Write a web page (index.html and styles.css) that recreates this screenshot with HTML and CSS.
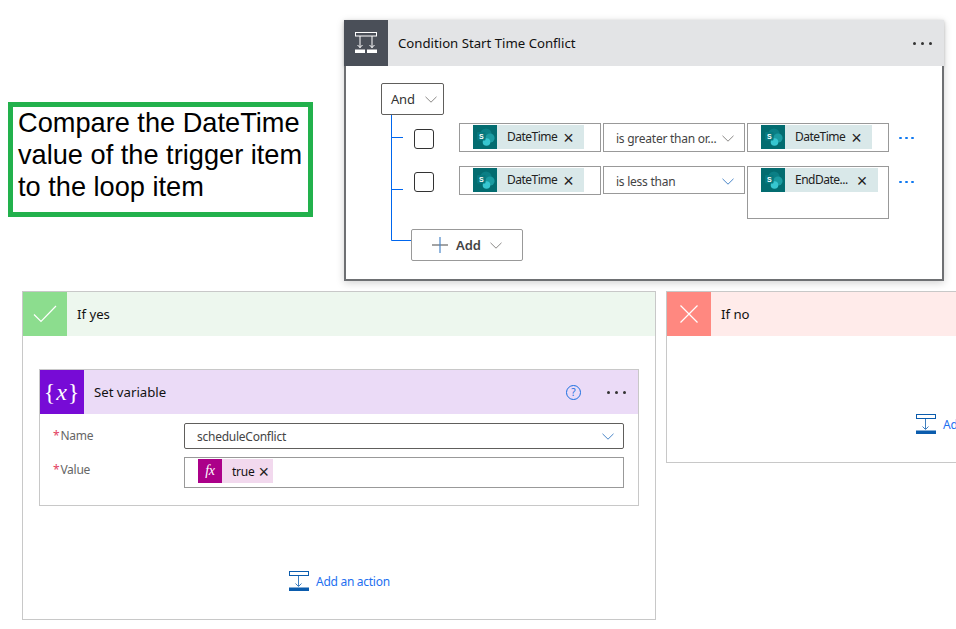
FILE: index.html
```html
<!DOCTYPE html>
<html lang="en">
<head>
<meta charset="utf-8">
<title>Condition Start Time Conflict</title>
<link rel="stylesheet" href="styles.css">
</head>
<body>
<main class="canvas">
  <svg width="0" height="0" class="defs" aria-hidden="true">
    <defs>
      <symbol id="sp" viewBox="0 0 24 24">
        <rect width="24" height="24" fill="#036c70"/>
        <circle cx="13" cy="9" r="5.6" fill="#0b7f85"/>
        <circle cx="17" cy="13" r="4.6" fill="#1a9ba1"/>
        <circle cx="13.5" cy="17" r="3.8" fill="#37c6d0"/>
        <rect x="4" y="7" width="8.5" height="8.5" rx="1" fill="#06797e"/>
        <text x="8.2" y="14" class="sp-s">S</text>
      </symbol>
      <symbol id="chev" viewBox="0 0 12 7">
        <path d="M.5.8 6 6.2 11.5.8" fill="none" stroke="currentColor" stroke-width="1"/>
      </symbol>
      <symbol id="addact" viewBox="0 0 20 20">
        <rect x=".5" y=".5" width="19" height="4" fill="none" stroke="#0b5cad" stroke-width="1"/>
        <path d="M9.5 5v10M6.5 12.5l3 3 3-3" fill="none" stroke="#3f7fbf" stroke-width="1"/>
        <rect y="16.5" width="20" height="3.5" fill="#0b5cad"/>
      </symbol>
    </defs>
  </svg>

  <aside class="note">Compare the DateTime value of the trigger item to the loop item</aside>

  <section class="condition">
    <header class="head head-cond">
      <span class="tile tile-cond">
        <svg width="24" height="24" viewBox="0 0 24 24" fill="none" stroke="#fff" stroke-width="1">
          <rect x="1.5" y="1.5" width="21" height="3.5"/>
          <path d="M6 5v12M18 5v12M3.5 14 6 16.5 8.500 14M15.500 14 18 16.500 20.500 14"/>
          <rect x="1" y="18.500" width="10" height="3.500" fill="#fff" stroke="none"/>
          <rect x="13" y="18.500" width="10" height="3.500" fill="#fff" stroke="none"/>
        </svg>
      </span>
      <span class="title">Condition Start Time Conflict</span>
      <span class="dots dots-dark"><i></i><i></i><i></i></span>
    </header>
    <div class="cond-body">
      <svg class="tree" width="24" height="126" viewBox="0 0 24 126" aria-hidden="true">
        <path d="M.500 0V125.500H20M.500 22.500H12M.500 74.500H12" fill="none" stroke="#0066ee" stroke-width="1"/>
      </svg>
      <button class="and">And <svg class="chev chev-grey"><use href="#chev"/></svg></button>
      <div class="row row-one">
        <span class="check"></span>
        <div class="field">
          <span class="token tok-sp"><svg class="tok-ic"><use href="#sp"/></svg><span class="tok-text">DateTime</span><span class="tok-x">×</span></span>
        </div>
        <div class="select"><span>is greater than or...</span><svg class="chev chev-grey"><use href="#chev"/></svg></div>
        <div class="field">
          <span class="token tok-sp"><svg class="tok-ic"><use href="#sp"/></svg><span class="tok-text">DateTime</span><span class="tok-x">×</span></span>
        </div>
        <span class="more"><i></i><i></i><i></i></span>
      </div>
      <div class="row row-two">
        <span class="check"></span>
        <div class="field">
          <span class="token tok-sp"><svg class="tok-ic"><use href="#sp"/></svg><span class="tok-text">DateTime</span><span class="tok-x">×</span></span>
        </div>
        <div class="select"><span>is less than</span><svg class="chev chev-blue"><use href="#chev"/></svg></div>
        <div class="field field-tall">
          <span class="token tok-sp tok-wide"><svg class="tok-ic"><use href="#sp"/></svg><span class="tok-text">EndDate...</span><span class="tok-x">×</span></span>
        </div>
        <span class="more"><i></i><i></i><i></i></span>
      </div>
      <button class="add">
        <svg width="16" height="16" viewBox="0 0 16 16"><path d="M0 8h16" stroke="#666" stroke-width="1.200"/><path d="M8 0v16" stroke="#4a86c8" stroke-width="1.200"/></svg>
        <b>Add</b>
        <svg class="chev chev-grey"><use href="#chev"/></svg>
      </button>
    </div>
  </section>

  <section class="branch branch-yes">
    <header class="head head-yes">
      <span class="tile tile-yes">
        <svg width="24" height="18" viewBox="0 0 24 18"><path d="M1 9.500 8 16.500 23 1" fill="none" stroke="#fff" stroke-width="1.200"/></svg>
      </span>
      <span class="title">If yes</span>
    </header>
    <div class="branch-body">
      <article class="action">
        <header class="head head-var">
          <span class="tile tile-var"><span class="braces">{<em>x</em>}</span></span>
          <span class="title">Set variable</span>
          <span class="help">?</span>
          <span class="dots dots-dark dots-var"><i></i><i></i><i></i></span>
        </header>
        <div class="form">
          <div class="form-row">
            <label class="label"><span class="req">*</span>Name</label>
            <div class="combo"><span>scheduleConflict</span><svg class="chev chev-blue"><use href="#chev"/></svg></div>
          </div>
          <div class="form-row">
            <label class="label"><span class="req">*</span>Value</label>
            <div class="value">
              <span class="token tok-fx"><span class="fx">fx</span><span class="tok-text tok-true">true</span><span class="tok-x">×</span></span>
            </div>
          </div>
        </div>
      </article>
      <a class="add-action"><svg width="20" height="20"><use href="#addact"/></svg><span>Add an action</span></a>
    </div>
  </section>

  <section class="branch branch-no">
    <header class="head head-no">
      <span class="tile tile-no">
        <svg width="18" height="18" viewBox="0 0 18 18"><path d="M.5.500l17 17M17.500.500l-17 17" stroke="#fff" stroke-width="1.200"/></svg>
      </span>
      <span class="title">If no</span>
    </header>
    <div class="branch-body">
      <a class="add-action add-action-no"><svg width="20" height="20"><use href="#addact"/></svg><span>Add an action</span></a>
    </div>
  </section>
</main>
</body>
</html>
```
FILE: styles.css
```css
* { box-sizing: border-box; }
html, body { margin: 0; padding: 0; background: #fff; }
body { font-family: "Noto Sans", "Open Sans", sans-serif; color: #111; overflow: hidden; }
.canvas { position: relative; width: 956px; height: 629px; overflow: hidden; }
.defs { position: absolute; }
.sp-s { font: bold 7px "Liberation Sans", sans-serif; fill: #fff; text-anchor: middle; }

.note {
  position: absolute; left: 8px; top: 102px; width: 305px; height: 115px;
  border: 5px solid #22b14c; padding: 0 0 0 5px;
  font: 27.2px/32px "Liberation Sans", Arial, sans-serif; color: #000;
}

.head { display: flex; align-items: center; height: 44px; font-size: 13.2px; }
.tile { flex: none; width: 44px; height: 44px; display: flex; align-items: center; justify-content: center; }
.title { margin-left: 10px; flex: 1; }

.condition { position: absolute; left: 344px; top: 20px; width: 600px; box-shadow: 0 2px 8px rgba(0,0,0,.18); }
.head-cond { height: 46px; background: #e3e4e6; box-shadow: 0 1px 3px rgba(0,0,0,.2); position: relative; }
.tile-cond { height: 46px; background: #4a4f58; }
.dots { display: flex; gap: 5px; margin-right: 12px; }
.dots i { width: 3px; height: 3px; border-radius: 50%; background: #333; }
.dots-var { margin-right: 12px; margin-left: 26px; gap: 5px; }

.cond-body {
  position: relative; height: 215px; background: #fff;
  border: 2px solid #6e7073; border-top: 0; padding: 17px 0 0 35px;
}
.tree { position: absolute; left: 45px; top: 49px; }
.and {
  display: flex; align-items: center; gap: 10px;
  width: 63px; height: 32px; padding: 0 0 0 9px; background: #fff;
  border: 1px solid #605e5c; border-radius: 2px; font: 13px "Noto Sans", sans-serif; color: #333;
  letter-spacing: -.2px;
}
.chev { width: 12px; height: 7px; flex: none; }
.chev-grey { color: #8a8886; }
.chev-blue { color: #4a86c8; }

.row { display: flex; align-items: flex-start; margin-left: 33px; gap: 2px; font-size: 12px; letter-spacing: -.25px; }
.row-one { margin-top: 8px; height: 29px; }
.row-two { margin-top: 14px; height: 53px; }
.check { width: 20px; height: 20px; margin: 6px 23px 0 0; border: 1px solid #333; border-radius: 3px; background: #fff; flex: none; }
.field { width: 142px; height: 29px; padding: 1px 13px; border: 1px solid #999; flex: none; }
.field-tall { height: 53px; }
.select { display: flex; align-items: center; justify-content: space-between; width: 142px; height: 29px; padding: 1px 10px 0 12px; border: 1px solid #999; color: #444; flex: none; }
.row-two .select { height: 28px; padding-top: 2px; }
.more { display: flex; gap: 3px; margin: 14px 0 0 8px; }
.row-two .more { margin-top: 15px; }
.more i { width: 3px; height: 2px; background: #0f78f0; border-radius: 1px; }

.token { display: flex; align-items: center; height: 24px; width: 111px; }
.tok-sp { background: #d9e8e9; }
.tok-ic { width: 24px; height: 24px; flex: none; }
.tok-text { margin-left: 10px; color: #222; line-height: 22px; letter-spacing: -.5px; }
.tok-x { margin-left: 6px; padding-top: 2px; font: 18px/22px "Liberation Sans", sans-serif; color: #222; }
.tok-wide { width: 117px; }
.tok-wide .tok-x { margin-left: 9px; }

.add {
  display: flex; align-items: center; margin: 10px 0 0 30px;
  width: 112px; height: 32px; padding: 0 0 0 20px; background: #fff;
  border: 1px solid #999; border-radius: 2px; font: 13px "Noto Sans", sans-serif; color: #444;
}
.add b { margin: 0 9px 0 8px; font-weight: 600; }

.branch { position: absolute; border: 1px solid #c8c8c8; background: #fff; }
.branch-yes { left: 22px; top: 291px; width: 634px; height: 329px; }
.branch-no { left: 666px; top: 291px; width: 320px; height: 172px; }
.head-yes { background: #edf7ee; }
.tile-yes { background: #8cdd8e; }
.head-no { background: #ffebea; }
.tile-no { background: #ff8880; }
.branch-body { position: relative; padding: 33px 16px 0; }

.action { border: 1px solid #c8c8c8; height: 137px; }
.head-var { background: #ebdbf7; }
.tile-var { background: #770bd6; }
.braces { font: 24px/22px "Liberation Serif", serif; color: #fff; letter-spacing: 1px; white-space: nowrap; }
.help {
  width: 15px; height: 15px; border: 1px solid #1a6fe0; border-radius: 50%;
  color: #1a6fe0; font-size: 10px; line-height: 13px; text-align: center;
}

.form { padding: 9px 14px 0 13px; display: flex; flex-direction: column; gap: 8px; }
.form-row { display: flex; align-items: flex-start; font-size: 12px; letter-spacing: -.25px; }
.label { width: 131px; color: #666; padding-top: 4px; line-height: 18px; }
.req { color: #e3405f; margin-right: 1px; }
.combo { flex: 1; display: flex; align-items: center; justify-content: space-between; height: 26px; padding: 1px 9px 0 12px; border: 1px solid #605e5c; border-radius: 2px; color: #444; }
.value { flex: 1; height: 31px; padding: 1px 13px; border: 1px solid #999; }
.tok-fx { width: 75px; background: #f2d9ee; }
.tok-fx .tok-x { margin-left: 4px; }
.fx { width: 24px; height: 24px; background: #ab0089; color: #fff; text-align: center; font: italic 14px/24px "Liberation Serif", serif; flex: none; }
.tok-true { color: #111; letter-spacing: -.25px; padding-top: 1px; }

.add-action { position: absolute; left: 266px; top: 235px; display: flex; align-items: center; gap: 7px; font-size: 12px; letter-spacing: -.28px; color: #1e6ff0; white-space: nowrap; }
.add-action-no { left: 249px; top: 78px; }
```
